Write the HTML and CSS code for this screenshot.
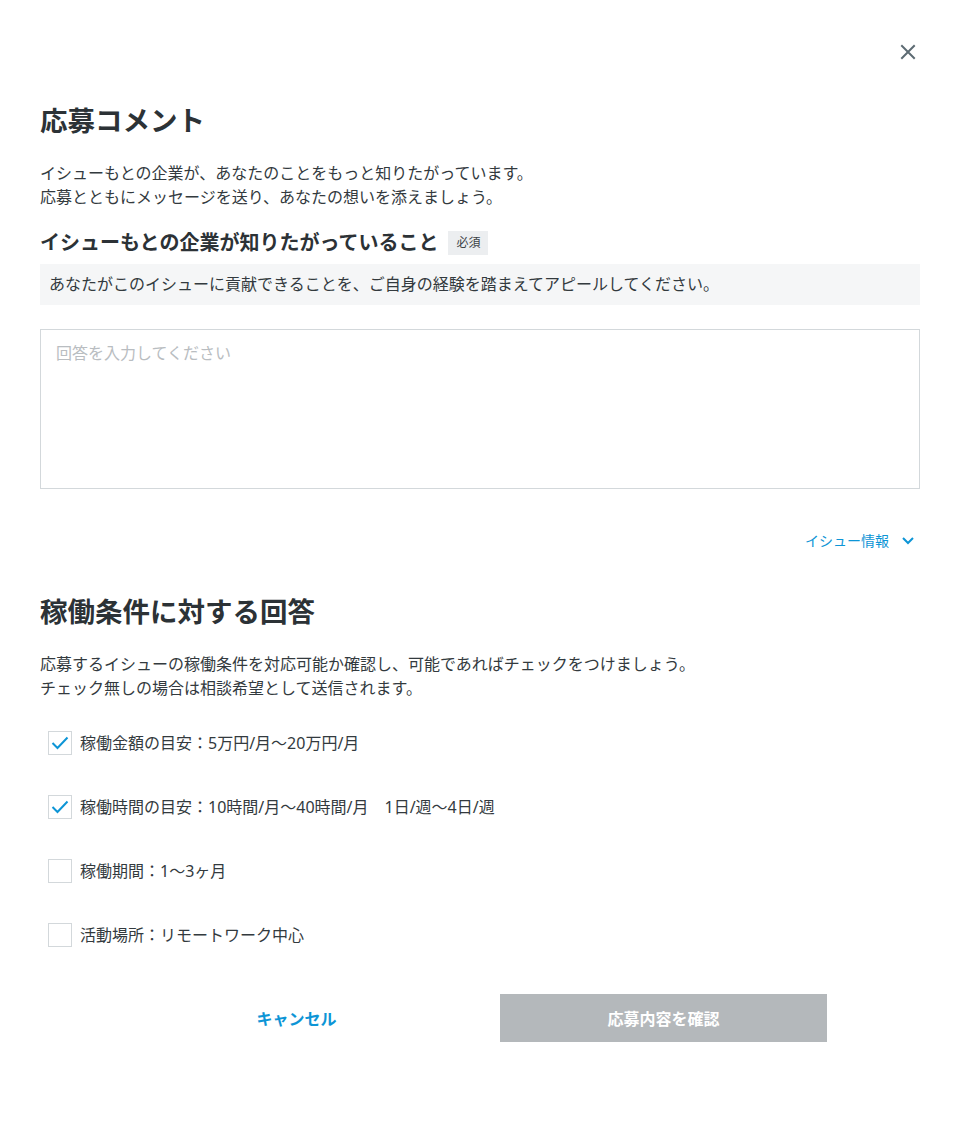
FILE: index.html
```html
<!DOCTYPE html>
<html lang="ja">
  <head>
    <meta charset="utf-8" />
    <meta name="viewport" content="width=device-width, initial-scale=1" />
    <title>応募コメント</title>
    <link rel="stylesheet" href="styles.css">
  </head>
  <body>
    <div class="modal">
      <div class="close-row">
        <button class="close-button" aria-label="閉じる">
          <svg width="16" height="16" viewBox="0 0 16 16">
            <path d="M2 2 L14 14 M14 2 L2 14" stroke="#5d6b73" stroke-width="2" stroke-linecap="square" fill="none" />
          </svg>
        </button>
      </div>

      <h1 class="title">応募コメント</h1>
      <p class="lead">
        イシューもとの企業が、あなたのことをもっと知りたがっています。<br />
        応募とともにメッセージを送り、あなたの想いを添えましょう。
      </p>

      <h2 class="question">
        イシューもとの企業が知りたがっていること
        <span class="required">必須</span>
      </h2>
      <div class="question-body">
        あなたがこのイシューに貢献できることを、ご自身の経験を踏まえてアピールしてください。
      </div>
      <textarea class="answer" placeholder="回答を入力してください"></textarea>

      <div class="issue-link-row">
        <a class="issue-link" href="#">
          イシュー情報
          <svg width="14" height="10" viewBox="0 0 14 10">
            <path d="M2 2 L7 7 L12 2" stroke="#0d95d6" stroke-width="2" fill="none" />
          </svg>
        </a>
      </div>

      <h1 class="title title-second">稼働条件に対する回答</h1>
      <p class="lead">
        応募するイシューの稼働条件を対応可能か確認し、可能であればチェックをつけましょう。<br />
        チェック無しの場合は相談希望として送信されます。
      </p>

      <ul class="conditions">
        <li class="condition">
          <span class="checkbox checked">
            <svg width="18" height="14" viewBox="0 0 18 14">
              <path d="M1.5 7 L6.5 12 L16.5 1.5" stroke="#0d95d6" stroke-width="2" fill="none" />
            </svg>
          </span>
          <span>稼働金額の目安：5万円/月〜20万円/月</span>
        </li>
        <li class="condition">
          <span class="checkbox checked">
            <svg width="18" height="14" viewBox="0 0 18 14">
              <path d="M1.5 7 L6.5 12 L16.5 1.5" stroke="#0d95d6" stroke-width="2" fill="none" />
            </svg>
          </span>
          <span>稼働時間の目安：10時間/月〜40時間/月　1日/週〜4日/週</span>
        </li>
        <li class="condition">
          <span class="checkbox"></span>
          <span>稼働期間：1〜3ヶ月</span>
        </li>
        <li class="condition">
          <span class="checkbox"></span>
          <span>活動場所：リモートワーク中心</span>
        </li>
      </ul>

      <div class="actions">
        <button class="btn btn-cancel">キャンセル</button>
        <button class="btn btn-confirm" disabled>応募内容を確認</button>
      </div>
    </div>
  </body>
</html>
```

FILE: styles.css
```css
body {
  margin: 0;
  background: #fff;
  color: #333a3e;
  font-family: "Noto Sans", "Noto Sans CJK JP", sans-serif;
}

.modal {
  padding: 40px 40px 60px;
}

.close-row {
  display: flex;
  justify-content: flex-end;
}

.close-button {
  width: 24px;
  height: 24px;
  padding: 0;
  border: none;
  background: none;
  display: flex;
  align-items: center;
  justify-content: center;
}

.title {
  margin: 37px 0 0;
  font-size: 27.5px;
  line-height: 40px;
  font-weight: bold;
  color: #2c3236;
}

.title-second {
  margin-top: 40px;
}

.lead {
  margin: 21px 0 0;
  font-size: 16px;
  line-height: 23.5px;
}

.question {
  display: flex;
  align-items: center;
  margin: 20px 0 0;
  font-size: 20px;
  line-height: 28px;
  font-weight: bold;
  color: #2c3236;
}

.required {
  margin-left: 10px;
  padding: 0 8px;
  background: #eceef0;
  font-size: 12px;
  line-height: 24px;
  font-weight: normal;
  color: #3c4246;
}

.question-body {
  margin-top: 7px;
  padding: 9px 9px;
  background: #f5f6f7;
  font-size: 16px;
  line-height: 23px;
}

.answer {
  display: block;
  box-sizing: border-box;
  width: 100%;
  height: 160px;
  margin-top: 24px;
  padding: 12px 15px;
  border: 1px solid #d3d8db;
  border-radius: 0;
  resize: none;
  font-family: inherit;
  font-size: 16px;
  line-height: 23px;
}

.answer::placeholder {
  color: #b9bdc1;
}

.issue-link-row {
  display: flex;
  justify-content: flex-end;
  margin-top: 41px;
}

.issue-link {
  display: flex;
  align-items: center;
  gap: 12px;
  padding-right: 5px;
  color: #0d95d6;
  font-size: 14px;
  line-height: 22px;
  text-decoration: none;
}

.conditions {
  list-style: none;
  margin: 31px 0 0;
  padding: 0 0 0 8px;
  display: flex;
  flex-direction: column;
  gap: 40px;
}

.condition {
  display: flex;
  align-items: center;
  gap: 8px;
  height: 24px;
  font-size: 16px;
  line-height: 24px;
}

.checkbox {
  box-sizing: border-box;
  width: 24px;
  height: 24px;
  border: 1px solid #d3d8db;
  display: flex;
  align-items: center;
  justify-content: center;
  flex-shrink: 0;
}

.actions {
  display: flex;
  justify-content: center;
  gap: 40px;
  margin-top: 47px;
}

.btn {
  width: 327px;
  height: 48px;
  border: none;
  font-family: inherit;
  font-size: 16px;
  font-weight: bold;
}

.btn-cancel {
  background: none;
  color: #0d95d6;
}

.btn-confirm {
  background: #b4b8bb;
  color: #fff;
}
```
